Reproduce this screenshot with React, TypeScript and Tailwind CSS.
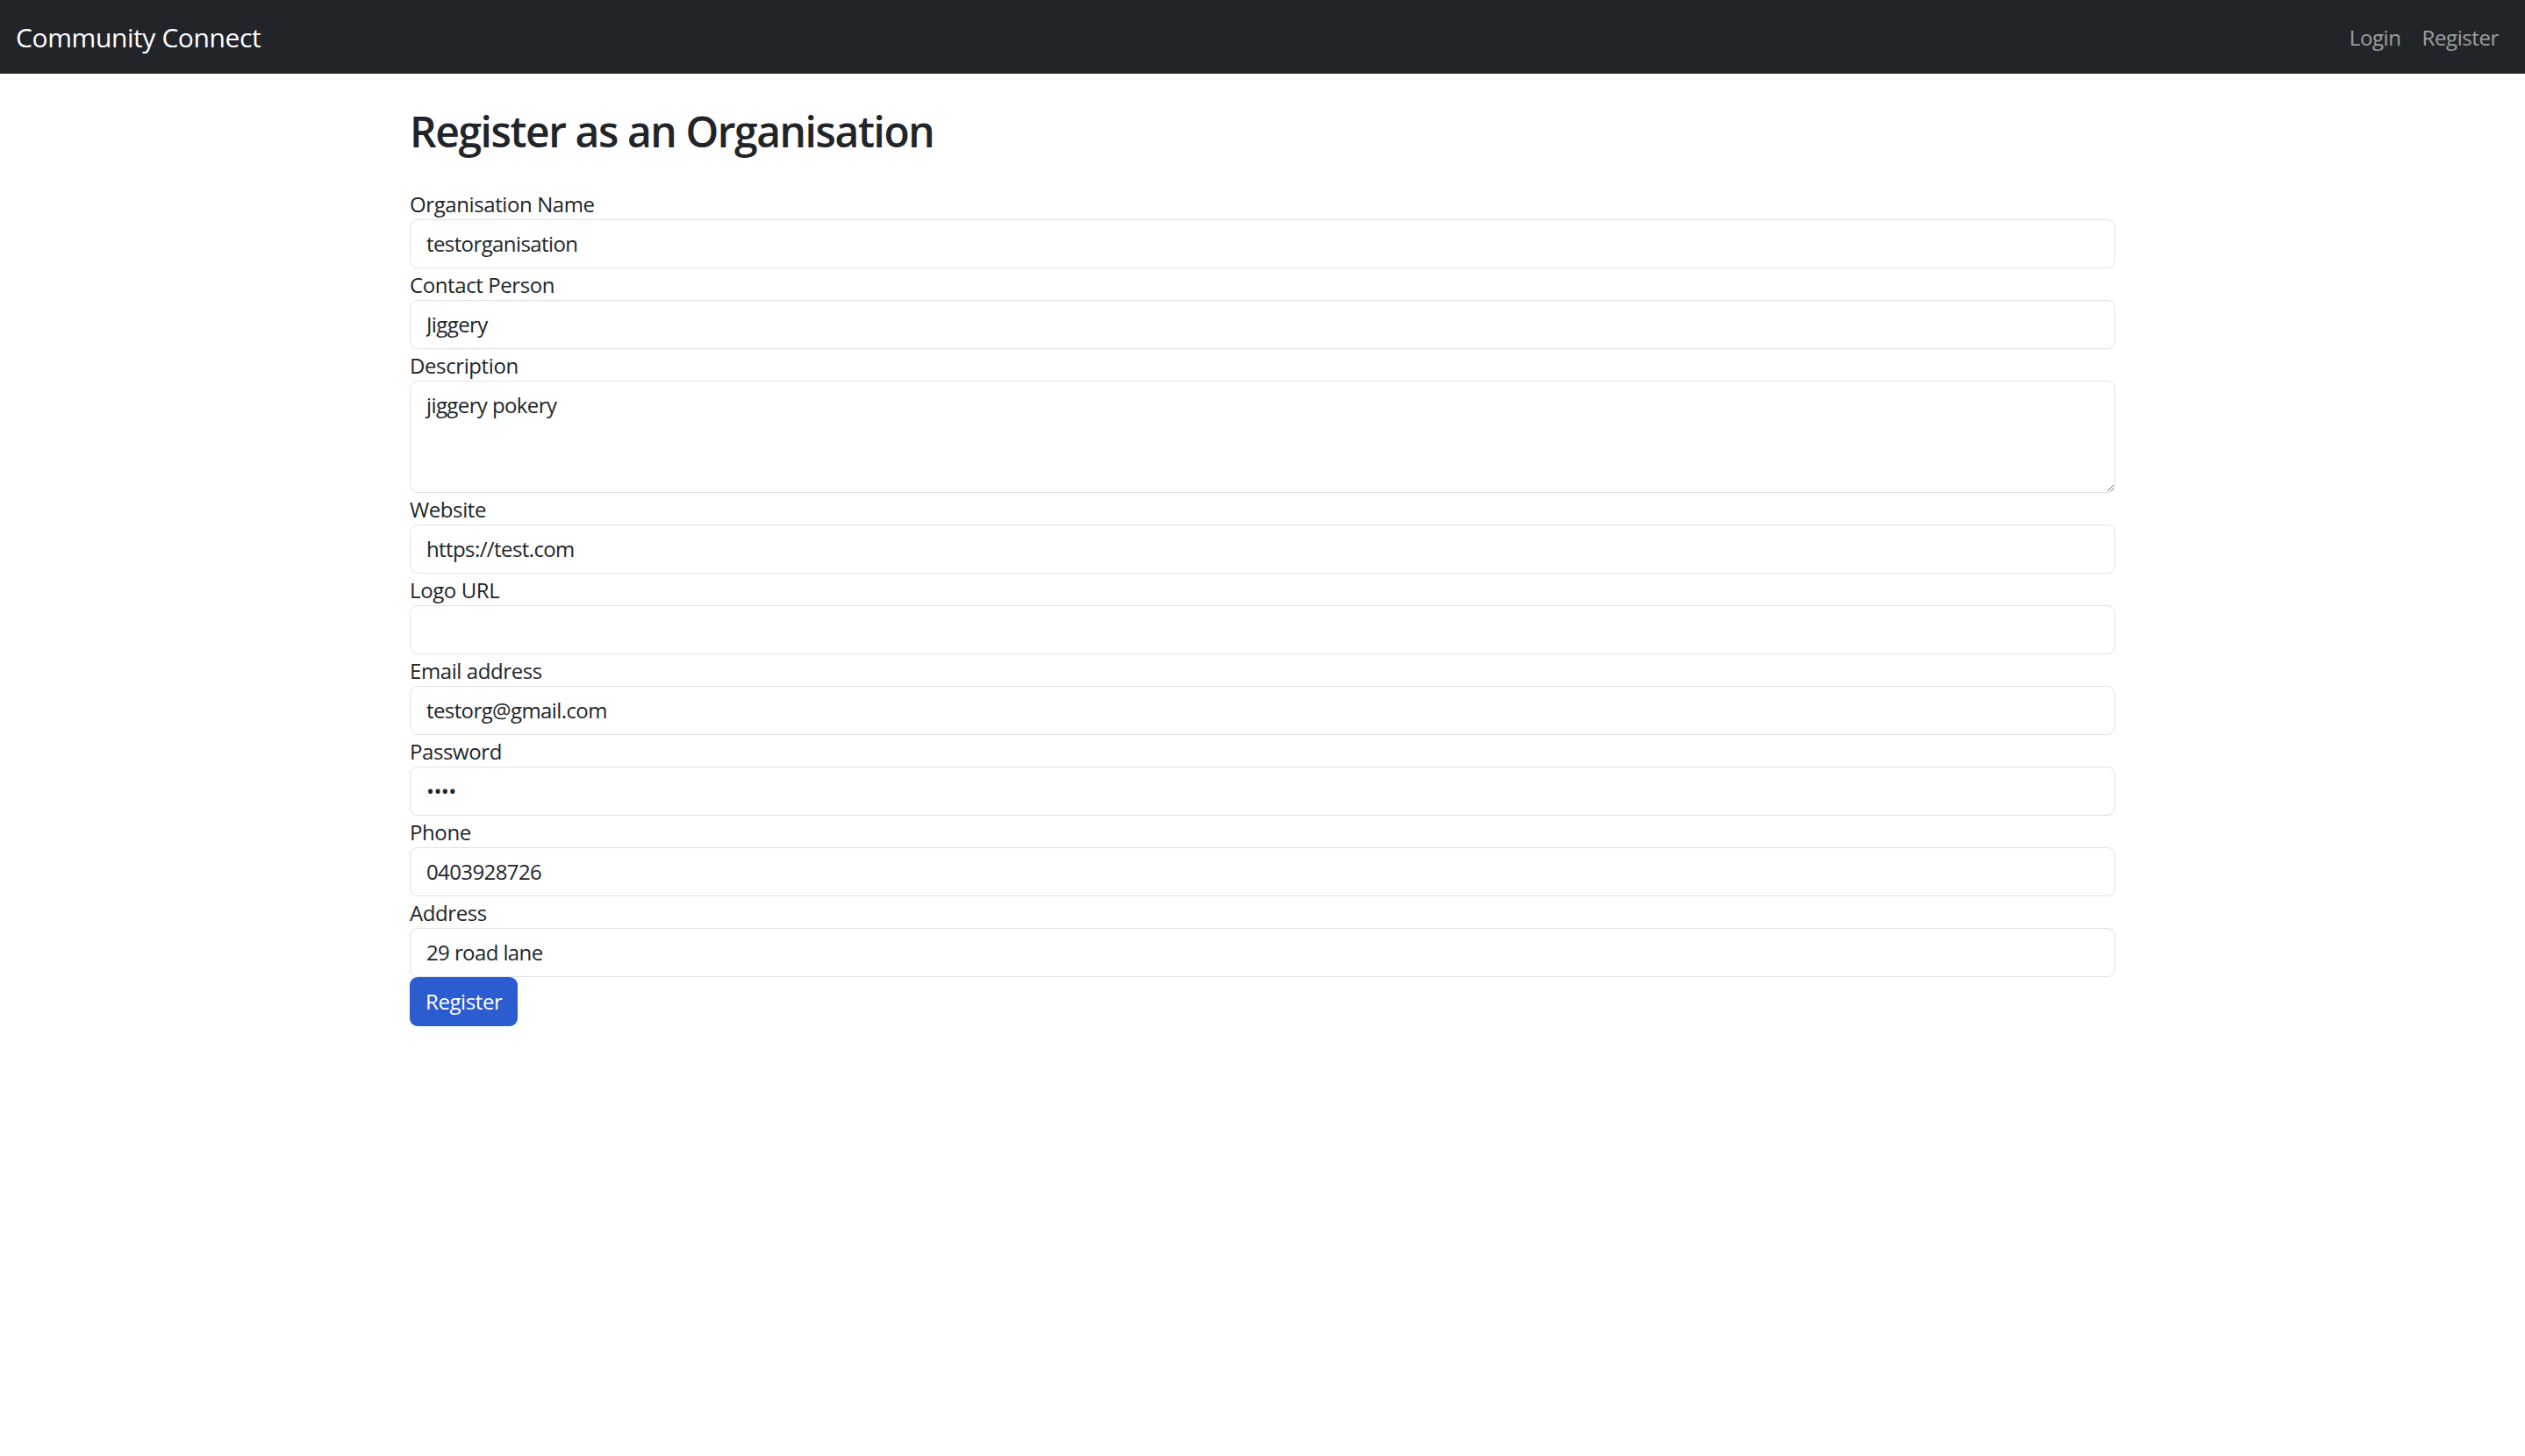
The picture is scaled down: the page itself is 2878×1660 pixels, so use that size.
import { useState } from "react";

const fields = [
  { label: "Organisation Name", type: "text", value: "testorganisation" },
  { label: "Contact Person", type: "text", value: "Jiggery" },
  { label: "Description", type: "textarea", value: "jiggery pokery" },
  { label: "Website", type: "url", value: "https://test.com" },
  { label: "Logo URL", type: "url", value: "" },
  { label: "Email address", type: "email", value: "testorg@gmail.com" },
  { label: "Password", type: "password", value: "test" },
  { label: "Phone", type: "tel", value: "0403928726" },
  { label: "Address", type: "text", value: "29 road lane" },
];

const inputClass =
  "block w-full border border-[#dee2e6] rounded-[9px] bg-white px-[18px] py-[9px] text-[24px] leading-[36px] tracking-[-0.025em] text-[#212529] outline-none";

export default function App() {
  const [values, setValues] = useState<Record<string, string>>(
    Object.fromEntries(fields.map((f) => [f.label, f.value]))
  );

  return (
    <div className="min-h-screen bg-white text-[#212529] tracking-[-0.025em] font-['Open_Sans',sans-serif]">
      {/* navbar */}
      <nav className="h-[84px] bg-[#212529] flex items-center justify-between px-[18px]">
        <a href="#" className="text-[30px] text-white leading-[45px]">
          Community Connect
        </a>
        <div className="flex items-center text-[24px] text-white/55 pt-[2px]">
          <a href="#" className="px-[12px] py-[12px]">Login</a>
          <a href="#" className="px-[12px] py-[12px]">Register</a>
        </div>
      </nav>

      {/* register form */}
      <main className="max-w-[1980px] mx-auto px-[18px]">
        <h2 className="mt-[37px] mb-[35px] text-[48px] leading-[1.2] font-semibold tracking-[-0.03em]">
          Register as an Organisation
        </h2>
        <form onSubmit={(e) => e.preventDefault()}>
          {fields.map((f) => (
            <div key={f.label}>
              <label className="block text-[24px] leading-[36px] pt-[1px] -mb-[1px]">{f.label}</label>
              {f.type === "textarea" ? (
                <textarea
                  rows={3}
                  className={inputClass + " h-[128px]"}
                  value={values[f.label]}
                  onChange={(e) => setValues({ ...values, [f.label]: e.target.value })}
                />
              ) : (
                <input
                  type={f.type}
                  className={inputClass + " h-[56px]"}
                  value={values[f.label]}
                  onChange={(e) => setValues({ ...values, [f.label]: e.target.value })}
                />
              )}
            </div>
          ))}
          <button
            type="submit"
            className="h-[56px] px-[18px] rounded-[9px] bg-[#2b5cd0] text-white text-[24px] leading-[36px]"
          >
            Register
          </button>
        </form>
      </main>
    </div>
  );
}
